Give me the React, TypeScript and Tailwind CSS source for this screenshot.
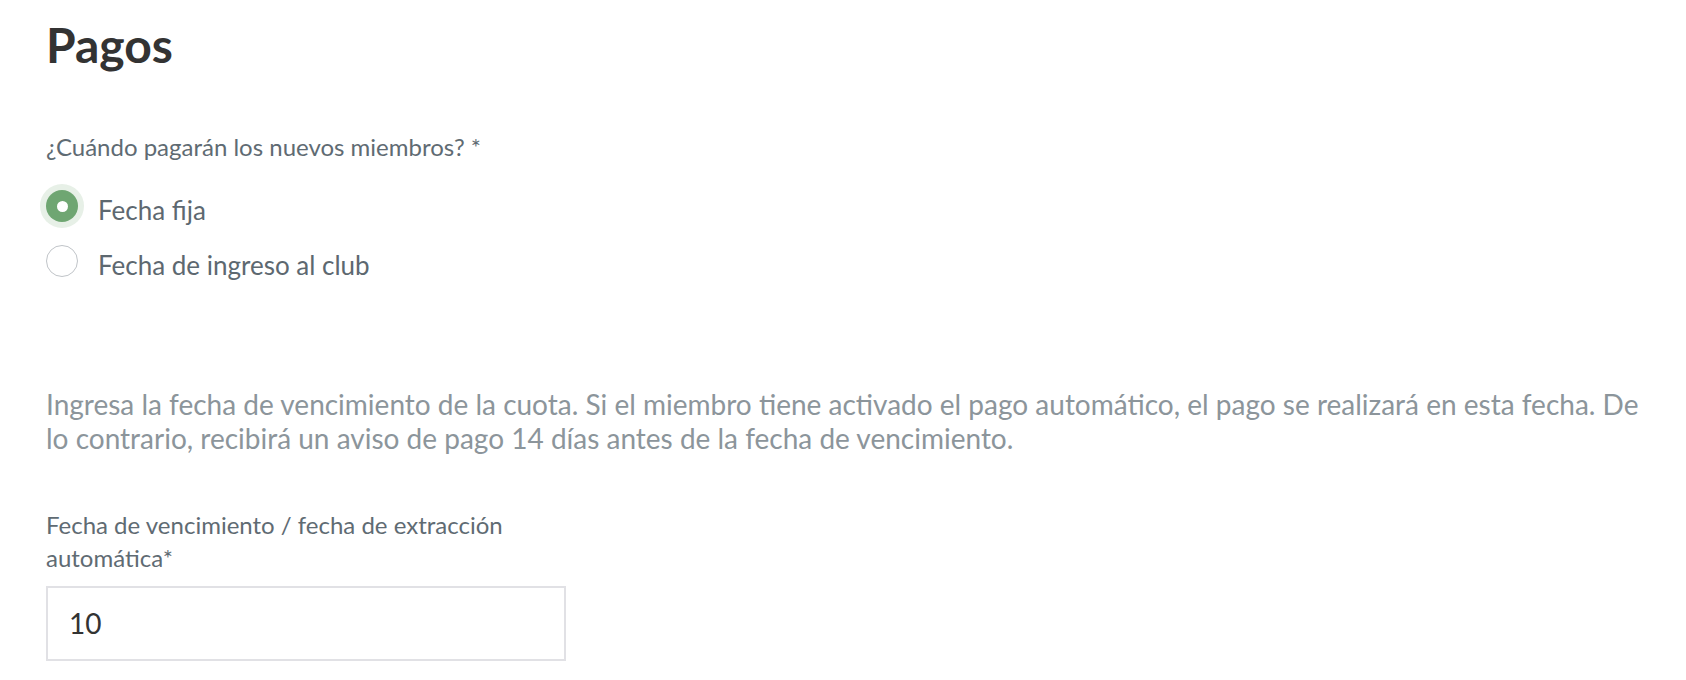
import { useState } from 'react'

const options = ['Fecha fija', 'Fecha de ingreso al club']

export default function App() {
  const [selected, setSelected] = useState(0)
  const [day, setDay] = useState('10')

  return (
    <div
      className="min-h-screen bg-white pl-[46px] pr-[30px] pt-4"
      style={{ fontFamily: 'Lato, "Open Sans", sans-serif' }}
    >
      <h1 className="text-[48px] font-bold leading-[1.2] text-[#333333]">Pagos</h1>

      <p className="mt-[59px] text-[24px] leading-[28px] text-[#5f6b73]">
        ¿Cuándo pagarán los nuevos miembros? *
      </p>

      <div className="mt-[18px] flex flex-col">
        {options.map((label, i) => {
          const active = i === selected
          return (
            <label
              key={label}
              className="flex h-[55px] cursor-pointer items-center gap-[20px]"
              onClick={() => setSelected(i)}
            >
              <span
                className={
                  active
                    ? 'flex h-8 w-8 shrink-0 items-center justify-center rounded-full bg-[#6fa672] ring-[6px] ring-[#e7f0e7]'
                    : 'h-8 w-8 shrink-0 rounded-full border-[1.5px] border-[#c0c4c8] bg-white'
                }
              >
                {active && <span className="h-[11px] w-[11px] rounded-full bg-white" />}
              </span>
              <span className="pt-[7px] text-[26px] leading-none text-[#5d6870]">{label}</span>
            </label>
          )
        })}
      </div>

      <p className="mt-[98px] text-[28px] leading-[34px] text-[#8c959b]">
        Ingresa la fecha de vencimiento de la cuota. Si el miembro tiene activado el pago automático, el pago
        se realizará en esta fecha. De lo contrario, recibirá un aviso de pago 14 días antes de la fecha de
        vencimiento.
      </p>

      <div className="mt-[53px] w-[520px]">
        <label className="block text-[24px] leading-[33px] text-[#5f6b73]">
          Fecha de vencimiento / fecha de extracción automática*
        </label>
        <input
          value={day}
          onChange={(e) => setDay(e.target.value)}
          className="mt-[12px] h-[75px] w-full border-2 border-[#e1e1e5] bg-white px-[21px] text-[28px] text-[#333333] outline-none"
        />
      </div>
    </div>
  )
}
